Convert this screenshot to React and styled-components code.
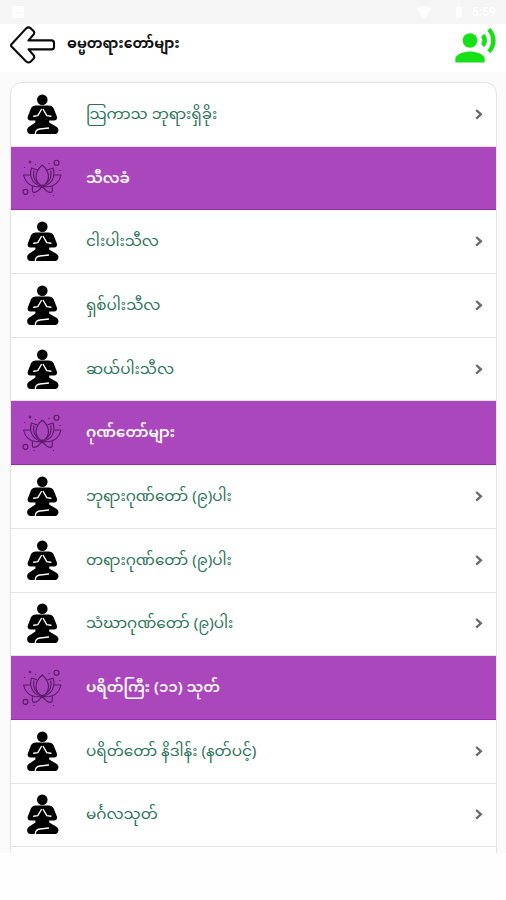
import React from 'react';
import styled, { createGlobalStyle, css } from 'styled-components';
import { MdRecordVoiceOver, MdSignalWifi4Bar, MdBatteryFull } from 'react-icons/md';

const GlobalStyle = createGlobalStyle`
  * { box-sizing: border-box; }
  body {
    margin: 0;
    background: #fefefe;
    font-family: "Noto Sans", "Noto Sans Myanmar", sans-serif;
  }
`;

const Screen = styled.div`
  display: flex;
  flex-direction: column;
  width: 506px;
  height: 900px;
  overflow: hidden;
`;

const StatusBar = styled.div`
  display: flex;
  align-items: center;
  flex: 0 0 24px;
  padding: 0 8px 0 12px;
  background: #f5f5f5;
  color: #fff;
`;

const StatusIcons = styled.div`
  display: flex;
  align-items: center;
  margin-left: auto;
`;

const WifiIcon = styled(MdSignalWifi4Bar)`
  width: 18px;
  height: 16px;
  margin-right: 17px;
`;

const BatteryIcon = styled(MdBatteryFull)`
  width: 18px;
  height: 14px;
  margin-right: 4px;
`;

const Clock = styled.span`
  width: 26px;
  font: 500 12px/24px Roboto, sans-serif;
`;

const Header = styled.header`
  display: flex;
  align-items: flex-start;
  flex: 0 0 48px;
  padding: 0 8px 0 10px;
  background: #fff;
`;

const BackArrow = styled.svg`
  flex: none;
  width: 46px;
  height: 40px;
  margin-top: 2px;
`;

const Title = styled.h1`
  flex: 1;
  margin: 0 0 0 11px;
  color: #111;
  font-size: 14.2px;
  font-weight: 700;
  line-height: 37px;
  white-space: nowrap;
`;

const VoiceIcon = styled(MdRecordVoiceOver)`
  width: 45px;
  height: 44px;
  color: #16e016;
`;

const Content = styled.main`
  flex: 0 0 781px;
  padding: 10px 9px 0 10px;
  overflow: hidden;
  background: #fafafa;
`;

const Card = styled.ul`
  margin: 0;
  padding: 0;
  height: 800px;
  list-style: none;
  background: #fff;
  border: 1px solid #e3e3e3;
  border-radius: 12px;
`;

const Row = styled.li`
  display: grid;
  grid-template-columns: 75px 1fr 36px;
  align-items: center;
  height: 63.7px;
  border-bottom: 1px solid #e4e4e4;
  color: #2a7359;
  ${({ $section }) =>
    $section &&
    css`
      background: #ab47bc;
      border-bottom-color: #9c27b0;
      color: #fff;
    `}
`;

const Label = styled.span`
  font-size: ${({ $section }) => ($section ? '15px' : '15.2px')};
  font-weight: ${({ $section }) => ($section ? 600 : 400)};
  line-height: 30px;
  padding-bottom: 3px;
  white-space: nowrap;
`;

const MonkSvg = styled.svg`
  width: 32px;
  height: 41px;
  margin-left: 16px;
`;

const LotusSvg = styled.svg`
  width: 40px;
  height: 40px;
  margin-left: 11px;
`;

const ChevronSvg = styled.svg`
  width: 8px;
  height: 11px;
  margin-left: 15px;
`;

const Monk = () => (
  <MonkSvg viewBox="0 0 32 41">
    <circle cx="15.3" cy="5.7" r="5.3" />
    <path d="M9 11.6H21.5C24 11.6 25.8 12.6 26.7 14.5L29.9 22.5C30.6 24.7 29.4 26.4 27.2 26.4H22.2V28.6L29 32.4C31.5 33.9 32 36 31 38C30.3 39.5 29.4 40 28 40H3C-.2 39.7-1 34.7 2 32.8L8.4 28.6V26.4H3.4C1.2 26.4.1 24.7.8 22.5L3.9 14.5C4.8 12.6 6.6 11.6 9 11.6Z" />
    <path d="M6.7 22.2L10.8 21.6L14.4 15.5M23.9 22.2L19.8 21.6L16.2 15.5" fill="none" stroke="#fff" strokeWidth="1.4" strokeLinecap="round" strokeLinejoin="round" />
    <path d="M8.3 40C8.3 36.8 10 35.4 13 35L22 34" fill="none" stroke="#fff" strokeWidth="1.3" />
  </MonkSvg>
);

const Lotus = () => (
  <LotusSvg viewBox="0 0 40 40" fill="none" stroke="#5a1a6b" strokeWidth="1.15" strokeLinejoin="round">
    <path d="M20.3 7C16 10.5 14 14 14 19C14 23 16.5 26 20.3 28.5C24 26 26.5 23 26.5 19C26.5 14 24.5 10.5 20.3 7Z" />
    <path d="M15.3 12L9.5 10C8.2 14 8.5 19.5 11 23C13 26 16 27.6 20.3 28.5M25.3 12L31 10C32.3 14 32 19.5 29.6 23C27.5 26 24.5 27.6 20.3 28.5" />
    <path d="M12 12.5C10.8 17 12.5 22.5 16.5 26M28.6 12.5C29.8 17 28 22.5 24 26" />
    <path d="M8.4 17L1.5 17C3 24 8 28.5 14 28.7L20.3 28.5L26.5 28.7C32.5 28.5 37.5 24 39 17L32.2 17" />
    <path d="M20.3 28.5L15.5 33.3C13 34.8 10.4 34.8 10.4 33V28M20.3 28.5L25 33.3C27.5 34.8 30.2 34.8 30.2 33V28" />
    <circle cx="34.5" cy="4.7" r="2.5" />
    <circle cx="3.5" cy="33.8" r="2.5" />
    <path d="M8 2.5V5.5M6.5 4H9.5M13.5 6V7M27 5V6M2.5 9V10M38 12V13M31.5 37V38M12 37V38" />
    <circle cx="20.3" cy="28.3" r="1.3" fill="#5a1a6b" />
  </LotusSvg>
);

const Chevron = () => (
  <ChevronSvg viewBox="0 0 8 11" fill="none" stroke="#696969" strokeWidth="2.3">
    <path d="M1.2 1L5.9 5.3L1.2 9.6" />
  </ChevronSvg>
);

const items = [
  { text: 'သြကာသ ဘုရားရှိခိုး' },
  { text: 'သီလခံ', section: true },
  { text: 'ငါးပါးသီလ' },
  { text: 'ရှစ်ပါးသီလ' },
  { text: 'ဆယ်ပါးသီလ' },
  { text: 'ဂုဏ်တော်များ', section: true },
  { text: 'ဘုရားဂုဏ်တော် (၉)ပါး' },
  { text: 'တရားဂုဏ်တော် (၉)ပါး' },
  { text: 'သံဃာဂုဏ်တော် (၉)ပါး' },
  { text: 'ပရိတ်ကြီး (၁၁) သုတ်', section: true },
  { text: 'ပရိတ်တော် နိဒါန်း (နတ်ပင့်)' },
  { text: 'မင်္ဂလသုတ်' },
];

export default function App() {
  return (
    <Screen>
      <GlobalStyle />
      <StatusBar>
        <svg width="12" height="12" viewBox="0 0 12 12">
          <path d="M0 0H12V12H0Z" fill="#fff" />
          <path d="M3 7H9" stroke="#f0f0f0" />
        </svg>
        <StatusIcons>
          <WifiIcon />
          <BatteryIcon />
          <Clock>5:59</Clock>
        </StatusIcons>
      </StatusBar>
      <Header>
        <BackArrow viewBox="0 0 46 40" fill="none" stroke="#080808" strokeWidth="2.1" strokeLinejoin="round">
          <path d="M1.5 18.2L16.2 2.4Q18.5.5 20.8 2.4L23.5 5Q25 6.8 23.4 8.8L18.5 14.4H41.5Q44 14.4 44 17V21Q44 23.4 41.5 23.4H18.5L23.4 29Q25 31 23.5 32.8L20.8 35.5Q18.5 37.5 16.2 35.5L1.5 20.6Q.6 19.3 1.5 18.2Z" />
        </BackArrow>
        <Title>ဓမ္မတရားတော်များ</Title>
        <VoiceIcon />
      </Header>
      <Content>
        <Card>
          {items.map(({ text, section }) => (
            <Row key={text} $section={section}>
              {section ? <Lotus /> : <Monk />}
              <Label $section={section}>{text}</Label>
              {!section && <Chevron />}
            </Row>
          ))}
        </Card>
      </Content>
    </Screen>
  );
}
